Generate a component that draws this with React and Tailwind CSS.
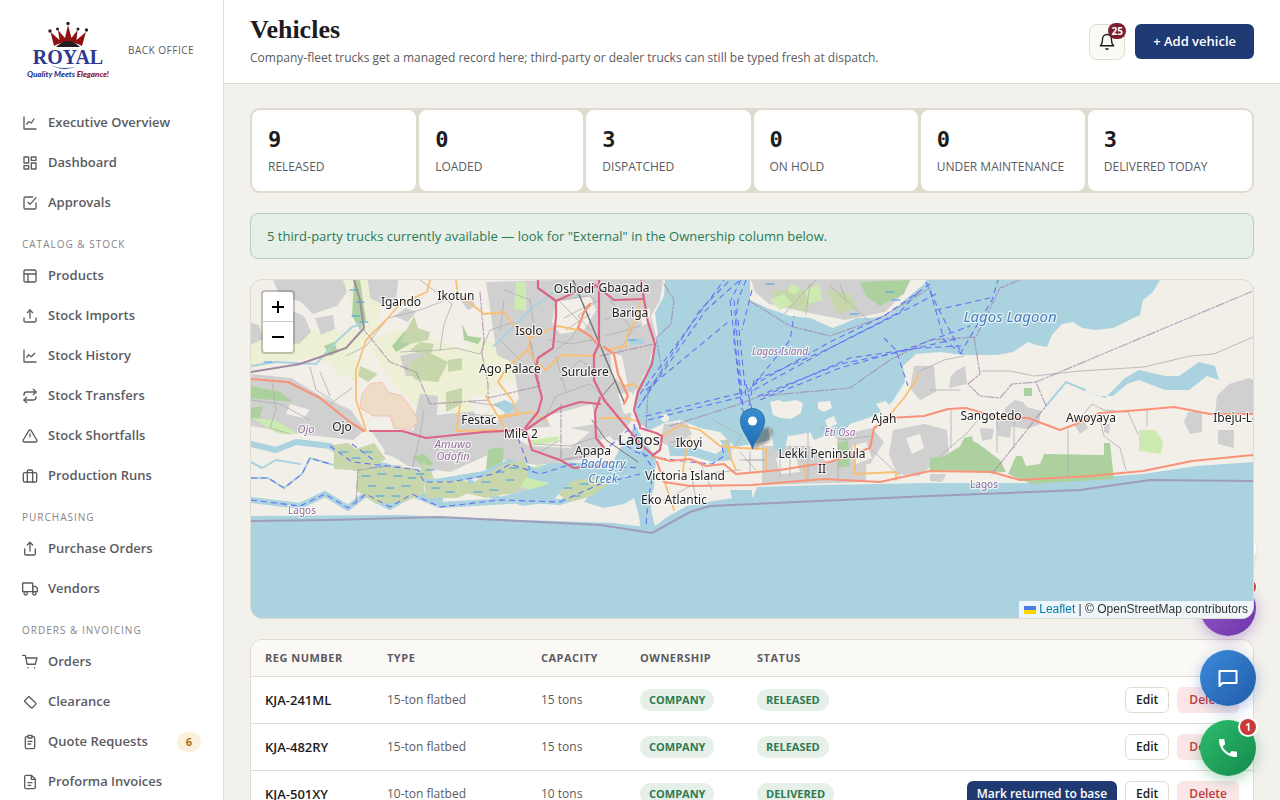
import React from 'react';

const navSections = [
  {
    title: null,
    items: [
      { label: 'Executive Overview', paths: ['M3 3v18h18', 'M7 14l3-4 4 2 4-6'] },
      { label: 'Dashboard', paths: ['M3 3h7v9H3z', 'M14 3h7v5h-7z', 'M14 12h7v9h-7z', 'M3 16h7v5H3z'] },
      { label: 'Approvals', paths: ['M9 11l3 3L21 4', 'M21 12v7a2 2 0 0 1-2 2H5a2 2 0 0 1-2-2V5a2 2 0 0 1 2-2h11'] },
    ],
  },
  {
    title: 'CATALOG & STOCK',
    items: [
      { label: 'Products', paths: ['M5 3h14a2 2 0 0 1 2 2v14a2 2 0 0 1-2 2H5a2 2 0 0 1-2-2V5a2 2 0 0 1 2-2z', 'M3 9h18', 'M9 21V9'] },
      { label: 'Stock Imports', paths: ['M21 15v4a2 2 0 0 1-2 2H5a2 2 0 0 1-2-2v-4', 'M8 7l4-4 4 4', 'M12 3v12'] },
      { label: 'Stock History', paths: ['M3 3v18h18', 'M7 14l3-4 4 3 5-5'] },
      { label: 'Stock Transfers', paths: ['M17 2l4 4-4 4', 'M3 11v-1a4 4 0 0 1 4-4h14', 'M7 22l-4-4 4-4', 'M21 13v1a4 4 0 0 1-4 4H3'] },
      { label: 'Stock Shortfalls', paths: ['M10.3 3.9L1.8 18a2 2 0 0 0 1.7 3h17a2 2 0 0 0 1.7-3L13.7 3.9a2 2 0 0 0-3.4 0z', 'M12 9v4'] },
      { label: 'Production Runs', paths: ['M4 7h16a2 2 0 0 1 2 2v10a2 2 0 0 1-2 2H4a2 2 0 0 1-2-2V9a2 2 0 0 1 2-2z', 'M16 21V5a2 2 0 0 0-2-2h-4a2 2 0 0 0-2 2v16'] },
    ],
  },
  {
    title: 'PURCHASING',
    items: [
      { label: 'Purchase Orders', paths: ['M4 12v7a2 2 0 0 0 2 2h12a2 2 0 0 0 2-2v-7', 'M16 6l-4-4-4 4', 'M12 2v13'] },
      { label: 'Vendors', paths: ['M1 3h15v13H1z', 'M16 8h4l3 3v5h-7z', 'M8 18.5a2.5 2.5 0 1 1-5 0 2.5 2.5 0 0 1 5 0z', 'M21 18.5a2.5 2.5 0 1 1-5 0 2.5 2.5 0 0 1 5 0z'] },
    ],
  },
  {
    title: 'ORDERS & INVOICING',
    items: [
      { label: 'Orders', paths: ['M1 2h4l2.7 13.4h12.2L22.5 6H6', 'M9 20.500v.5', 'M19 20.500v.5'] },
      { label: 'Clearance', paths: ['M10.4 3.6L4 10a1 1 0 0 0 0 1.4l9.6 9.2a1.4 1.4 0 0 0 2 0l5-5a1.4 1.4 0 0 0 0-2z'] },
      { label: 'Quote Requests', paths: ['M9 4H7a2 2 0 0 0-2 2v14a2 2 0 0 0 2 2h10a2 2 0 0 0 2-2V6a2 2 0 0 0-2-2h-2', 'M9 2h6v4H9z', 'M9 11h6', 'M9 15h4'], badge: 6 },
      { label: 'Proforma Invoices', paths: ['M14 2H6a2 2 0 0 0-2 2v16a2 2 0 0 0 2 2h12a2 2 0 0 0 2-2V8z', 'M14 2v6h6', 'M9 13h6', 'M9 17h4'] },
    ],
  },
];

const stats = [
  { value: 9, label: 'RELEASED' },
  { value: 0, label: 'LOADED' },
  { value: 3, label: 'DISPATCHED' },
  { value: 0, label: 'ON HOLD' },
  { value: 0, label: 'UNDER MAINTENANCE' },
  { value: 3, label: 'DELIVERED TODAY' },
];

const vehicles = [
  { reg: 'KJA-241ML', type: '15-ton flatbed', capacity: '15 tons', ownership: 'COMPANY', status: 'RELEASED' },
  { reg: 'KJA-482RY', type: '15-ton flatbed', capacity: '15 tons', ownership: 'COMPANY', status: 'RELEASED' },
  { reg: 'KJA-501XY', type: '10-ton flatbed', capacity: '10 tons', ownership: 'COMPANY', status: 'DELIVERED' },
];

// Map layers, bottom to top
const land = [
  'M251 280H665L664 296 655 313 658 335 653 355 645 375 637 388 634 405 640 424 650 430 664 423 680 420 700 428 720 432 735 447 752 444 770 440 768 430 775 422 790 436 812 432 840 436 850 424 868 418 880 412 892 402 905 382 903 366 916 354 940 352 963 355 982 355 997 355 1013 352 1022 346 1028 342 1036 345 1047 347 1052 335 1062 324 1073 322 1082 328 1096 330 1113 328 1140 315 1143 300 1153 292 1160 280H1253V462L1197 466 1143 474 1090 478 1030 483 930 483 823 485 757 487 753 497 733 498 707 502 687 506 667 517 655 526 651 510 652 480 646 464 636 458 640 480 634 498 640 520 645 527 613 523 500 519 400 515 251 516z',
  'M750 280V300L767 308 790 316 810 318 833 328 857 318 873 318 890 314 907 298 923 285 927 280z',
  'M661 418a4 4 0 1 0 8 0a4 4 0 1 0-8 0z',
  'M770 402l8-2 6 2 12-2 7 3-2 10-10 6-10-1-8-3z',
  'M818 402l12-1 2 7-8 4-6-3z',
  'M825 420l9-4 3 8-9 4z',
  'M876 404l10-3 4 6-8 6z',
];

const farmland = [
  'M251 330L290 320 320 332 360 330 350 300 340 280 362 280 372 320 360 350 330 362 300 357 251 369z',
  'M362 280H384L376 330 366 336z',
  'M366 340L400 330 450 345 480 352 510 372 560 360 500 385 470 400 420 410 390 380z',
  'M251 340h70l-20 20-50 3z',
  'M440 392l50-5 0 30-30 12z',
  'M470 340l30 2 18 36-36 12-24-14z',
  'M330 356l26-4 2 30-24-10z',
];

const urban = [
  'M273 280h70l4 12-10 14-24 8-12-12-22-8z',
  'M275 330a14 10 0 0 1 30-12l6 14-12 12-18-2z',
  'M315 318l18-3 2 14-14 6z',
  'M251 323l8 2 4 14-12 6z',
  'M368 280h30l-2 20-14 4-12-6z',
  'M251 374l40 4 30 18 30 14 14 20-12 10-54-6-48-8z',
  'M372 398l16 0 0 16-16 2z',
  'M486 282l70-2h107l-3 20-9 16 5 20-8 32-16 28-1 26-20 24-30 14-44 5-40-6-20-10-50 0 10-34 40-4 18 12 24-24-6-36-16-8z',
  'M372 432l50-2 60 8 8 16-40 18-42-6-22-14z',
  'M414 420l6-26 18 2-2 34-22 4z',
  'M400 356l28-6 14 12-12 14-24 0z',
  'M394 316l12-8 10 4-8 10z',
  'M500 494l20-16 36 2 20 10-30 6z',
  'M388 434l30 2 0 28-34-10z',
  'M460 300l10-4 6 10-8 4z',
  'M664 424l22-2 6 12-18 14-14-6z',
  'M762 446h48l16 16 40-6 0 26-104 3z',
  'M838 436l34-8 12 14-14 22-30 4z',
  'M893 430l32-6 22 6 2 22-30 24-22-2-8-20z',
  'M914 366l20 0 2 26-16 8-10-12z',
  'M957 370l8-4 2 18-18 4 2-12z',
  'M1005 408l10-8 8 2 4 5 14 4-2 14-14 4-20-4z',
  'M980 428l14 1-2 10-10 2z',
  'M996 420l16 2-2 16-12-2z',
  'M751 280h160l-10 16-16 16-40 8-40-8-36-8-14-12z',
  'M1217 396l12-12 20-6 4 2v34h-38z',
  'M1188 412h14v20l-12 2-6-12z',
  'M1218 430l16 0 0 18-16-4z',
  'M1074 424l10-4 4 8-8 6z',
  'M1104 424l6 0-1 10-5-2z',
  'M930 474l16 0-4 8-12-1z',
];

// Gaps between the built-up blocks
const clearings = [
  'M556 302l34-6 6 14-12 20-24 4-8-12z',
  'M546 416l46-12 4 20-26 4-20-2z',
  'M500 430l60-4 30 6-20 16-40-2z',
  'M470 396l16-2 4 16-14 8z',
  'M610 352l12 4 6 30-16-8z',
  'M618 394l14-2 4 20-12 2z',
  'M600 440l10-4 14 16-10 6z',
  'M640 312l10-4 0 14-8 4z',
  'M776 458l20 0 4 14-20 2z',
  'M852 446l14-4 6 16-16 6z',
  'M906 438l14-4 4 14-12 6z',
  'M290 404l20 6-6 8-18-4z',
];

const green = [
  'M354 280l6 0 6 40-6 10-8-14z',
  'M392 346l12-14 10-8-4 20-14 8z',
  'M462 324l6 12 14 2-4 6-14-4z',
  'M930 458l14-2 20-12 12-2 24 18 6 12-76-2z',
  'M1008 474l8-18 6 0 4 10 14-2 4-10 60 1v-12l6 0 4 36-52 3-30 2z',
  'M838 443l10-3 2 26-12 2z',
  'M860 282l50-2-6 14-24 12-14-10z',
  'M251 386l30 6 12 10-42-4z',
  'M251 408l12-2-4 14-8 0z',
  'M488 450l8-3 8 2-2 20-16 0z',
  'M1024 388h8v8h-8z',
  'M324 346l10-4 4 10-8 4z',
  'M412 456l12-2 10 10-10 4z',
  'M960 446l4-8 8-2 2 8-6 6z',
];

const scrub = [
  'M400 342l14-26 4 12 12 4-2 8-18 4z',
  'M412 360l20-6 16 8-10 20-22-2-10-10z',
  'M410 350l10-8 14 2-4 12z',
  'M446 392l16-4 0 16-16 8z',
  'M448 360l14-2 0 12-14 2z',
  'M360 366l18 8-10 8-10-6z',
  'M770 292l30-4 14 12-8 12-24-6z',
  'M826 290l24 4 8 14-20 6z',
];

const paleGreen = [
  'M516 282h10v28h-12z',
  'M524 470l18-6 14 18-24 8-16-4z',
  'M530 440l30-4-4 6-28 4z',
  'M1139 430h16l8 12-2 12-22-3z',
  'M770 300l14-6 8 10-12 6z',
  'M805 290l14-6 4 16-14 4z',
  'M251 418l24 2 24 14-20 0z',
  'M790 284l10 4-4 6-8-2z',
];

const marsh = [
  'M334 445l14-2 8 6 18-6 12 16-20 12-32-2z',
  'M358 470l40-4 26 4 0 24-20 8-28 2-20-14z',
  'M422 462l8 4 4 14-14-2z',
  'M480 478l24-14 22-4 2 16-12 16-30 6-24-6z',
  'M424 482l40-2 14 8-20 10-32 0z',
  'M558 494l16-14 24-2 10 6-16 12-22 6z',
];

const water = [
  'M634 424l14 22 8 12-2 30-8 24 2 18-8-4-2-30-10-20-14-16 6-12 10-10z',
  'M598 484l20-10 18 6 2 16-14 8-20 4-20-6z',
  'M540 488l20-8 2 10-10 12-30 4-10-4z',
  'M520 462l20 8 30-8 40 4 24 8-30 6-60 2-24-6z',
  'M1085 390l20 8 20-20 14-8 26 6 14 0 20-14 16 4 4 14-12-4-18 14-24 0-26-10-12 4-14 12-14 0z',
  'M668 444l8 4 20 0 20 6 8-6-4-8 10 0 2 20-20 2-20-6-22 0z',
  'M770 424l10-6 10 10-6 24-10-2z',
  'M493 404l12-4 12 6-10 8z',
  'M570 290l10 0-2 8z',
  'M630 340l14-2 0 6-14 1z',
  'M810 432l12-4 2 8-10 4z',
  'M730 490h22v8h-20z',
];

const creeks = [
  'M251 444L276 450 296 442 330 446 352 462 386 466 418 478 436 482 484 474 510 462 535 472 550 466 600 466 640 470',
  'M251 500L300 506 325 494 348 508 366 494 390 507 412 494 440 505 490 502 530 500 560 502 600 490',
  'M470 482L500 500 540 490 570 478',
  'M540 472L556 486 600 480 620 486',
  'M420 480L422 496 440 500',
];

const thinCreeks = [
  'M251 462L262 468 276 460 300 464',
  'M251 478L268 478 284 488 302 474 310 458 330 464 356 470 400 466',
  'M251 366L276 362 316 364 336 342 352 327 362 324',
  'M1046 406L1066 382 1085 390',
  'M494 346L530 310 556 290',
];

const primary = [
  'M538 280L538 288 556 301 576 292 594 287',
  'M556 301L556 316 553 348 538 358 535 372 542 398 538 412 525 428',
  'M599 280L599 344 594 355 594 380 604 400 624 424 640 444 653 455 660 450 662 436 656 433 640 428',
  'M594 284L614 300 644 299',
  'M641 280L644 299 648 322 655 344 652 364 638 392 634 410 640 426',
  'M600 404L580 402 560 408 540 420 526 430 484 432 426 438 402 431 370 431',
  'M526 430L532 450 560 460 574 468 596 466 612 462',
  'M600 398L595 412 596 438 604 448',
];

const trunk = [
  'M251 379L288 382 320 398 350 422 364 431',
  'M652 456L670 461 690 459 706 466 724 464 736 474 780 470 830 462 870 448 874 428 890 418 924 416 948 409 966 408 1000 418 1028 418 1060 430 1076 424 1100 413 1140 410 1174 407 1210 414 1253 414',
  'M657 462L664 482 690 486 752 485 824 479 880 482 930 471 992 472 1020 480 1090 476 1143 471 1192 461 1253 455',
  'M590 304L584 312 578 328 590 336 600 347',
  'M604 347L614 354 618 374 628 396 624 404',
];

const secondary = [
  'M430 280L427 292 400 304 386 320 366 340 356 370 356 400 364 424 366 431',
  'M456 280L458 294 484 314 504 312 514 326 530 338 558 326 582 331',
  'M530 338L528 350 536 362 546 370 562 355 596 356',
  'M528 350L508 366 498 382 512 400 518 414 500 416',
  'M486 396L500 420 506 430 456 431 460 406',
  'M500 418L530 412 546 420',
  'M640 300L638 318 628 332 626 346 606 350',
  'M600 418L626 418 640 422',
  'M624 386L634 384 640 390',
  'M660 438L680 425 700 430 720 446 740 448 766 449V470',
  'M726 440L730 456 736 470',
  'M664 480L674 510',
  'M690 438L684 462 682 480',
  'M888 417L904 398 916 380 918 374',
  'M804 464L806 480',
  'M855 445V474L896 472 896 480',
];

const minor = [
  'M346 356L366 346 388 318 420 310 446 300 470 296',
  'M400 352L440 350 456 348 480 354 490 330 514 322',
  'M440 350L444 324 452 304 420 280',
  'M310 367L316 390 332 400',
  'M272 382L276 410 270 428 290 434',
  'M330 404L352 388M251 400L280 404 310 420M330 396L320 372',
  'M560 302L580 322 572 338 556 350',
  'M596 302L578 316 590 330M564 318L594 302M566 330L590 314',
  'M556 300L590 296 600 304',
  'M560 380L580 360 596 370M548 340L570 344 592 340',
  'M546 416L556 396 590 384 606 400M556 356L566 392',
  'M610 300L632 330 620 350M604 320L628 310M606 336L640 326',
  'M504 290L530 300 534 326M500 340L520 360M504 300L500 330',
  'M982 371L1010 371 1034 376 1080 371 1144 367 1190 356 1214 354 1253 337',
  'M918 372L944 360 964 356',
  'M1068 430V478M1082 416L1092 404 1104 410 1128 412 1138 434',
  'M1100 420L1104 436 1120 448 1126 470M1147 410V426',
  'M951 410V448M997 416V452M1014 420V448',
  'M930 390L960 390M940 456L966 434 978 420',
  'M670 442L700 440M690 468L696 500M676 494L694 484M700 462L712 490M664 500L676 496',
  'M740 452L756 470M750 452V472M745 460H766',
  'M820 426L840 440 870 436M808 430V480M838 440V482M872 450L900 476M780 446V476M790 446V476',
  'M534 444L570 446 600 436M540 452L560 440M470 402L500 406M464 414L494 416',
  'M784 314L806 290 816 280M830 286L850 304 868 320M810 284L806 314M840 284L846 300',
  'M713 420L742 436 732 450',
  'M740 460H766M700 474L740 470M412 470L420 436 424 410',
];

const ferries = [
  'M638 408L700 310 730 280', 'M642 402L706 310 740 280', 'M640 394L724 280', 'M646 390L728 322', 'M646 416L745 392', 'M648 420L745 396',
  'M730 300L737 360 742 400', 'M734 300L740 372 744 420', 'M746 280L738 300 734 340 742 410', 'M738 320L746 396', 'M752 290L742 330', 'M741 280L731 300',
  'M748 392L790 340 794 316', 'M746 384L752 410 750 420', 'M754 380L748 410',
  'M752 386L830 342 884 316 930 284', 'M754 390L834 346 890 318 940 292',
  'M756 380L826 350 900 312 920 290', 'M758 396L840 364 900 352 960 338', 'M760 400L840 368 904 350 970 326',
  'M764 396L850 358 920 348 962 346', 'M884 338L896 350 908 386', 'M930 290L944 340 962 354', 'M936 310L990 298',
  'M960 354L992 300 998 280', 'M926 282L938 308 962 354', 'M634 424L638 446 654 470 648 500 646 526', 'M610 446L628 430 638 448',
  'M618 440L636 452 648 456', 'M560 502L600 484 640 474',
  'M251 478L268 478 284 488 302 474 310 458 330 464',
  'M330 446L352 462 388 466 418 470 424 482 450 482 494 474 510 464 540 474 572 464 640 468',
  'M251 500L300 506 325 494 348 508 366 494 390 507 412 494 440 507 500 500 560 502',
  'M518 438L530 470', 'M352 444L376 462', 'M660 458L690 462 712 464 724 456 722 446',
];

const borders = [
  'M480 292L484 340 482 354 488 384 488 400 430 404 416 372 390 362 364 330',
  'M488 398L540 386 530 340',
  'M664 284L674 300 671 324 656 338 662 370 648 390 646 430',
  'M751 302L790 326 830 336 880 318 930 288',
  'M670 426L740 404 760 396 850 388 890 360 930 340 976 337 1000 288 1020 280',
  'M974 337L980 374 968 384 980 396 1000 398 1012 384 1036 382 1046 406 992 474',
  'M1036 382L1253 291',
  'M561 404V460L598 454',
  'M600 356L654 344',
  'M356 504L358 470 386 466',
];

const coastBorder = 'M251 521L330 520 440 517 500 520 600 525 652 533 690 512 710 506 930 496 1080 490 1150 480 1253 481';

const marshDashes = [
  [344, 452], [356, 458], [368, 452], [366, 476], [382, 474], [398, 476], [412, 478], [372, 486], [390, 488], [406, 486], [380, 496], [396, 496],
  [486, 482], [500, 472], [514, 468], [510, 480], [494, 490], [478, 492], [436, 488], [450, 492], [568, 488], [584, 484], [576, 496],
  [354, 290], [360, 302], [356, 316], [364, 322], [268, 362], [890, 292], [896, 300], [770, 284], [854, 314], [632, 340], [430, 470], [420, 474],
];

const mapLabels = [
  { text: 'Oshodi', x: 574, y: 293, size: 12 },
  { text: 'Gbagada', x: 624, y: 292, size: 12 },
  { text: 'Ikotun', x: 456, y: 300, size: 12 },
  { text: 'Igando', x: 401, y: 306, size: 12 },
  { text: 'Bariga', x: 630, y: 317, size: 12 },
  { text: 'Isolo', x: 529, y: 335, size: 12 },
  { text: 'Ago Palace', x: 510, y: 373, size: 12 },
  { text: 'Surulere', x: 585, y: 376, size: 12 },
  { text: 'Festac', x: 479, y: 424, size: 12 },
  { text: 'Ojo', x: 342, y: 431, size: 12 },
  { text: 'Mile 2', x: 521, y: 438, size: 12 },
  { text: 'Apapa', x: 593, y: 455, size: 12 },
  { text: 'Lagos', x: 639, y: 445, size: 15 },
  { text: 'Ikoyi', x: 689, y: 447, size: 12 },
  { text: 'Victoria Island', x: 685, y: 480, size: 12 },
  { text: 'Eko Atlantic', x: 674, y: 504, size: 12 },
  { text: 'Lekki Peninsula', x: 822, y: 458, size: 12 },
  { text: 'II', x: 822, y: 473, size: 12 },
  { text: 'Ajah', x: 884, y: 423, size: 12 },
  { text: 'Sangotedo', x: 991, y: 420, size: 12 },
  { text: 'Awoyaya', x: 1091, y: 422, size: 12 },
  { text: 'Ibeju-Lekki', x: 1244, y: 422, size: 12 },
  { text: 'Ojo', x: 306, y: 433, size: 11, kind: 'area' },
  { text: 'Amuwo', x: 453, y: 448, size: 11, kind: 'area' },
  { text: 'Odofin', x: 453, y: 460, size: 11, kind: 'area' },
  { text: 'Lagos Island', x: 780, y: 355, size: 10, kind: 'area' },
  { text: 'Eti Osa', x: 840, y: 436, size: 10, kind: 'area' },
  { text: 'Lagos', x: 302, y: 514, size: 10, kind: 'state' },
  { text: 'Lagos', x: 984, y: 488, size: 10, kind: 'state' },
  { text: 'Badagry', x: 603, y: 468, size: 12, kind: 'water' },
  { text: 'Creek', x: 603, y: 483, size: 12, kind: 'water' },
  { text: 'Lagos Lagoon', x: 1010, y: 322, size: 15, kind: 'water' },
];

const labelFill = { area: '#9a6fa0', state: '#8d6a95', water: '#4a80bd' };

function Paths({ list, ...rest }) {
  return (
    <g {...rest}>
      {list.map((d) => <path key={d} d={d} />)}
    </g>
  );
}

function LineIcon({ paths, className = 'w-4 h-4', strokeWidth = 2 }) {
  return (
    <svg className={`${className} shrink-0`} viewBox="0 0 24 24" fill="none" stroke="currentColor" strokeWidth={strokeWidth} strokeLinecap="round" strokeLinejoin="round" aria-hidden="true">
      {paths.map((d) => <path key={d} d={d} />)}
    </svg>
  );
}

function Logo() {
  return (
    <svg className="w-24 h-[58px] shrink-0 overflow-visible" viewBox="20 21 96 58" role="img" aria-label="Royal - Quality Meets Elegance!">
      <path d="M54 46L50.500 32 59.500 40 58 30 65 38 68 25 71.500 38 77.500 30 76.500 40 86 32 82 46Q68 38 54 46z" fill="#8f1013" />
      <path d="M56 47Q68 35 80 47z" fill="#231f20" />
      <g fill="#231f20">
        <circle cx="50" cy="31" r="1.700" />
        <circle cx="57.500" cy="29" r="1.500" />
        <circle cx="68" cy="23.500" r="1.700" />
        <circle cx="78" cy="29" r="1.500" />
        <circle cx="86.500" cy="30" r="1.700" />
      </g>
      <text x="68" y="64" textAnchor="middle" fontFamily='"Liberation Serif", serif' fontWeight="700" fontSize="20" fill="#2b3990">ROYAL</text>
      <path d="M46 62Q57 71 77 66.500Q60 73 46 62z" fill="#2b3990" />
      <text x="68" y="77" textAnchor="middle" fontFamily='Lato, sans-serif' fontStyle="italic" fontWeight="900" fontSize="8" fill="#2b3990">
        Quality Meets <tspan fill="#8f1013">Elegance!</tspan>
      </text>
    </svg>
  );
}

function Sidebar() {
  return (
    <aside className="w-56 shrink-0 bg-white border-r border-[#dfdbce] overflow-hidden">
      <div className="flex items-center gap-3 h-[103px] px-5 pb-1">
        <Logo />
        <span className="text-[10px] leading-4 tracking-[0.5px] text-[#5b5b62]">BACK OFFICE</span>
      </div>
      <nav>
        {navSections.map((section) => (
          <div key={section.items[0].label}>
            {section.title && (
              <h2 className="px-[22px] pt-[13px] pb-1 text-[10px] leading-4 tracking-[1px] text-[#85858a]">{section.title}</h2>
            )}
            <ul>
              {section.items.map((item) => (
                <li key={item.label}>
                  <a href="#" className="flex items-center gap-2.5 h-10 px-[22px] text-[13px] font-semibold text-[#5b5b62]">
                    <LineIcon paths={item.paths} />
                    <span className="flex-1 whitespace-nowrap">{item.label}</span>
                    {item.badge && (
                      <span className="rounded-full bg-[#faf0dc] px-2 py-0.5 min-w-6 text-center text-[11px] leading-4 font-bold text-[#a9701c]">{item.badge}</span>
                    )}
                  </a>
                </li>
              ))}
            </ul>
          </div>
        ))}
      </nav>
    </aside>
  );
}

function Header() {
  return (
    <header className="flex items-center justify-between h-[84px] px-[26px] bg-white border-b border-[#dfdbce]">
      <div>
        <h1 className="font-['Liberation_Serif',serif] text-[26px] leading-7 font-bold text-[#1c1c20]">Vehicles</h1>
        <p className="mt-1 text-xs leading-5 text-[#5b5b62]">
          Company-fleet trucks get a managed record here; third-party or dealer trucks can still be typed fresh at dispatch.
        </p>
      </div>
      <div className="flex items-center gap-2.5">
        <button type="button" aria-label="Notifications" className="relative flex items-center justify-center w-9 h-9 rounded-lg border border-[#dfdbce] bg-[#faf9f5] text-[#1c1c20]">
          <LineIcon paths={['M18 8a6 6 0 0 0-12 0c0 7-3 9-3 9h18s-3-2-3-9', 'M13.500 21a2 2 0 0 1-3 0']} className="w-[18px] h-[18px]" strokeWidth={1.8} />
          <span className="absolute -top-0.5 -right-0.5 min-w-[18px] h-4 px-[3px] rounded-full bg-[#7b1e2e] text-white text-[10px] leading-4 font-bold text-center">25</span>
        </button>
        <button type="button" className="h-[35px] px-[18px] rounded-md bg-[#1f3a72] text-white text-[13px] font-semibold">+ Add vehicle</button>
      </div>
    </header>
  );
}

function FleetMap() {
  return (
    <section aria-label="Fleet map" className="relative z-20 h-[340px] rounded-xl border border-[#dfdbce] bg-[#aad3df] overflow-hidden">
      <svg className="w-full h-full" viewBox="251 280 1002 338" preserveAspectRatio="xMidYMid slice" strokeLinejoin="round" strokeLinecap="round">
        <Paths list={land} fill="#f2efe9" />
        <Paths list={farmland} fill="#eef0d5" />
        <Paths list={urban} fill="#d0d0d0" />
        <Paths list={clearings} fill="#f2efe9" />
        <Paths list={green} fill="#add19e" />
        <Paths list={scrub} fill="#c8d7ab" />
        <Paths list={paleGreen} fill="#cdebb0" />
        <path d="M370 384l12-2 6 10 14 4 12 16 4 10-8 8-16-2-4-12-16 0-14-8 2-14z" fill="#efdcc6" stroke="#f2b8aa" strokeWidth="0.8" />
        <Paths list={water} fill="#aad3df" />
        <Paths list={creeks} fill="none" stroke="#aad3df" strokeWidth="6" />
        <Paths list={thinCreeks} fill="none" stroke="#aad3df" strokeWidth="2" />
        <Paths list={marsh} fill="#c8d7ab" />
        <g stroke="#3f9cf0" strokeWidth="1">
          {marshDashes.map(([x, y]) => <path key={`${x}-${y}`} d={`M${x - 4} ${y}h8`} />)}
        </g>
        <Paths list={minor} fill="none" stroke="#aeaeb0" strokeWidth="0.8" />
        <Paths list={borders} fill="none" stroke="#a184a8" strokeWidth="1.200" strokeDasharray="9 2 2 2" opacity="0.7" />
        <path d={coastBorder} fill="none" stroke="#9c8fb4" strokeWidth="2" opacity="0.8" />
        <path d="M251 372L300 364 346 348 364 328 360 300 354 280" fill="none" stroke="#a28ba0" strokeWidth="2" />
        <path d="M573 280L600 345 624 402" fill="none" stroke="#777" strokeWidth="1.500" />
        <path d="M592 420L606 440 638 462M602 396L616 380" fill="none" stroke="#777" strokeWidth="1" />
        <Paths list={ferries} fill="none" stroke="#6672f5" strokeWidth="1.100" strokeDasharray="6 4" strokeLinecap="butt" />
        <Paths list={secondary} fill="none" stroke="#f9bf72" strokeWidth="1.800" />
        <Paths list={trunk} fill="none" stroke="#f8937a" strokeWidth="2.200" />
        <Paths list={primary} fill="none" stroke="#dc6484" strokeWidth="2.200" />
        <g textAnchor="middle" fontFamily='"Noto Sans", sans-serif' paintOrder="stroke" stroke="#ffffff" strokeOpacity="0.7" strokeWidth="2.500">
          {mapLabels.map((label) => (
            <text key={`${label.text}-${label.x}`} x={label.x} y={label.y} fontSize={label.size} fill={labelFill[label.kind] || '#222222'} fontStyle={label.kind && label.kind !== 'state' ? 'italic' : 'normal'}>
              {label.text}
            </text>
          ))}
        </g>
        <defs>
          <linearGradient id="pin" x1="0" y1="0" x2="0" y2="1">
            <stop offset="0" stopColor="#3a8fd0" />
            <stop offset="1" stopColor="#1f6ab5" />
          </linearGradient>
          <filter id="soft" x="-30%" y="-30%" width="160%" height="160%">
            <feGaussianBlur stdDeviation="1.800" />
          </filter>
        </defs>
        <path d="M753 449L757 436Q764 424 772 429Q774 437 766 443z" fill="#000" opacity="0.35" filter="url(#soft)" />
        <path d="M752.500 448.500C749 438 740.500 430 740.500 420.500a12 12 0 0 1 24 0C764.500 430 756 438 752.500 448.500z" fill="url(#pin)" stroke="#2a6da8" />
        <circle cx="752.500" cy="421" r="4.500" fill="#ffffff" />
      </svg>
      <div className="absolute top-2.5 left-2.5 w-[34px] rounded border-2 border-black/20 bg-white bg-clip-padding overflow-hidden">
        <button type="button" aria-label="Zoom in" className="flex items-center justify-center w-full h-[30px] border-b border-[#cccccc] text-black">
          <svg className="w-3 h-3" viewBox="0 0 12 12" stroke="currentColor" strokeWidth="2"><path d="M6 0v12M0 6h12" /></svg>
        </button>
        <button type="button" aria-label="Zoom out" className="flex items-center justify-center w-full h-[30px] text-black">
          <svg className="w-3 h-3" viewBox="0 0 12 12" stroke="currentColor" strokeWidth="2"><path d="M0 6h12" /></svg>
        </button>
      </div>
      <div className="absolute bottom-0 right-0 flex items-center px-[5px] bg-white/80 font-['Liberation_Sans',sans-serif] text-xs leading-[17px] text-[#333333] whitespace-pre">
        <a href="#" className="flex items-center gap-[3px] text-[#0078a8]">
          <svg className="w-3 h-2" viewBox="0 0 12 8" aria-hidden="true">
            <path fill="#4c7be1" d="M0 0h12v4H0z" />
            <path fill="#ffd500" d="M0 4h12v4H0z" />
          </svg>
          Leaflet
        </a>
        <span> | © OpenStreetMap contributors</span>
      </div>
    </section>
  );
}

function Pill({ children }) {
  return (
    <span className="inline-block rounded-full bg-[#e6f0e8] px-[9px] py-[3px] text-[11px] leading-4 font-bold text-[#2c7a52]">{children}</span>
  );
}

function VehicleTable() {
  return (
    <section className="rounded-xl border border-[#dfdbce] bg-white overflow-hidden">
      <table className="w-full text-left">
        <thead className="bg-[#faf9f5] text-[11px] leading-4 tracking-[0.5px] text-[#5b5b62]">
          <tr className="border-b border-[#dfdbce]">
            <th className="w-[122px] px-3.5 py-2.5 font-bold">REG NUMBER</th>
            <th className="w-[154px] px-3.5 py-2.5 font-bold">TYPE</th>
            <th className="w-[99px] px-3.5 py-2.5 font-bold">CAPACITY</th>
            <th className="w-[117px] px-3.5 py-2.5 font-bold">OWNERSHIP</th>
            <th className="px-3.5 py-2.5 font-bold">STATUS</th>
            <th className="px-3.5 py-2.5" aria-label="Actions" />
          </tr>
        </thead>
        <tbody className="text-xs leading-5 text-[#5b5b62]">
          {vehicles.map((vehicle) => (
            <tr key={vehicle.reg} className="border-b border-[#dfdbce]">
              <td className="px-3.5 py-2.5 text-[13px] font-semibold text-[#1c1c20] whitespace-nowrap">{vehicle.reg}</td>
              <td className="px-3.5 py-2.5">{vehicle.type}</td>
              <td className="px-3.5 py-2.5">{vehicle.capacity}</td>
              <td className="px-3.5 py-2.5"><Pill>{vehicle.ownership}</Pill></td>
              <td className="px-3.5 py-2.5"><Pill>{vehicle.status}</Pill></td>
              <td className="px-3.5 py-2.5">
                <div className="flex justify-end gap-2 font-semibold">
                  {vehicle.status === 'DELIVERED' && (
                    <button type="button" className="h-[26px] px-2.5 rounded-md bg-[#1f3a72] text-white">Mark returned to base</button>
                  )}
                  <button type="button" className="h-[26px] px-2.5 rounded-md border border-[#dfdbce] bg-white text-[#1c1c20]">Edit</button>
                  <button type="button" className="h-[26px] px-3 rounded-md bg-[#fae6e6] text-[#bf3a3f]">Delete</button>
                </div>
              </td>
            </tr>
          ))}
        </tbody>
      </table>
    </section>
  );
}

function FloatingActions() {
  return (
    <div className="fixed right-6 bottom-6 z-10 flex flex-col items-end gap-3.5">
      <button type="button" aria-label="Collapse" className="w-[34px] h-[34px] rounded-full bg-white shadow-md" />
      <button type="button" aria-label="Assistant" className="relative w-14 h-14 rounded-full bg-linear-to-br from-[#9b5cd0] to-[#6d35a8] shadow-[0_4px_14px_rgba(110,50,170,0.35)]">
        <span className="absolute -top-px right-0 w-4 h-4 rounded-full bg-[#c93a3a] ring-1 ring-white" />
      </button>
      <button type="button" aria-label="Chat" className="flex items-center justify-center w-14 h-14 rounded-full bg-linear-to-br from-[#3d8bdc] to-[#1f5ca8] text-white shadow-[0_4px_14px_rgba(30,90,180,0.35)]">
        <svg className="w-6 h-6" viewBox="0 0 24 24" fill="none" stroke="currentColor" strokeWidth="2" strokeLinejoin="round" aria-hidden="true">
          <path d="M3.500 5H20.500V17H6.500L3.500 20z" />
        </svg>
      </button>
      <button type="button" aria-label="Calls" className="relative flex items-center justify-center w-14 h-14 rounded-full bg-linear-to-br from-[#2dbd6e] to-[#148a4c] text-white shadow-[0_4px_14px_rgba(20,140,75,0.35)]">
        <svg className="w-6 h-6" viewBox="0 0 24 24" fill="currentColor" aria-hidden="true">
          <path d="M6.620 10.790c1.440 2.830 3.760 5.140 6.590 6.590l2.200-2.200c.27-.27.67-.36 1.020-.24 1.120.37 2.330.57 3.570.57.55 0 1 .45 1 1V20c0 .55-.45 1-1 1-9.390 0-17-7.610-17-17 0-.55.45-1 1-1h3.500c.55 0 1 .45 1 1 0 1.250.2 2.450.57 3.570.11.35.03.74-.25 1.020z" />
        </svg>
        <span className="absolute -top-px right-0 w-4 h-4 rounded-full bg-[#c93a3a] ring-2 ring-white text-[10px] leading-4 font-bold text-center">1</span>
      </button>
    </div>
  );
}

function App() {
  return (
    <div className="flex h-screen overflow-hidden bg-[#f3f1ec] font-['Open_Sans','Noto_Sans',sans-serif]">
      <Sidebar />
      <div className="flex-1 min-w-0">
        <Header />
        <main className="flex flex-col gap-5 px-[26px] pt-6">
          <dl className="grid grid-cols-6 gap-[3px] p-0.5 rounded-[10px] bg-[#dfdbce]">
            {stats.map((stat) => (
              <div key={stat.label} className="flex flex-col-reverse gap-1 px-4 pt-4 pb-[15px] rounded-lg bg-white">
                <dt className="text-xs leading-[18px] text-[#5b5b62] whitespace-nowrap">{stat.label}</dt>
                <dd className="font-['DejaVu_Sans_Mono',monospace] text-[22px] leading-7 font-bold text-[#1c1c20]">{stat.value}</dd>
              </div>
            ))}
          </dl>
          <p className="px-4 py-3 rounded-lg border border-[#abd3bf] bg-[#e6f0e8] text-[13px] leading-5 text-[#2c7a52]">
            5 third-party trucks currently available — look for "External" in the Ownership column below.
          </p>
          <FleetMap />
          <VehicleTable />
        </main>
      </div>
      <FloatingActions />
    </div>
  );
}

export default App;
